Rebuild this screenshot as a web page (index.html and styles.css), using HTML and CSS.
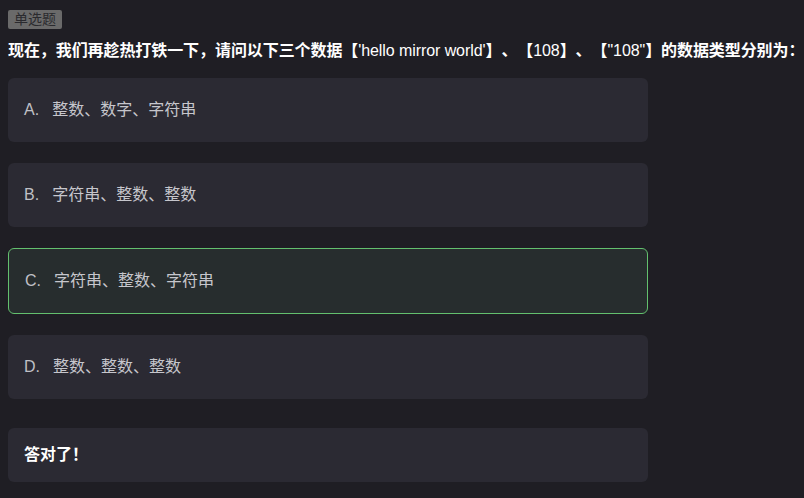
FILE: index.html
```html
<!DOCTYPE html>
<html lang="zh">
<head>
<meta charset="utf-8">
<link rel="stylesheet" href="styles.css">
</head>
<body>
<div class="quiz">
  <span class="badge">单选题</span>
  <div class="question">现在，我们再趁热打铁一下，请问以下三个数据【<span class="latin">'hello mirror world'</span>】、【<span class="latin">108</span>】、【<span class="latin">"108"</span>】的数据类型分别为：</div>
  <div class="options">
    <div class="option"><span class="letter">A.</span>整数、数字、字符串</div>
    <div class="option"><span class="letter">B.</span>字符串、整数、整数</div>
    <div class="option option-correct"><span class="letter">C.</span>字符串、整数、字符串</div>
    <div class="option"><span class="letter">D.</span>整数、整数、整数</div>
  </div>
  <div class="result">答对了！</div>
</div>
</body>
</html>
```
FILE: styles.css
```css
html, body {
  margin: 0;
  padding: 0;
  background: #1f1e24;
}
body {
  font-family: "Liberation Sans", "Noto Sans CJK SC", sans-serif;
  color: #c6c6cc;
  text-spacing-trim: space-all;
}
.quiz {
  padding: 10px 8px;
  display: flex;
  flex-direction: column;
  align-items: flex-start;
}
.badge {
  display: inline-block;
  background: #6a6a6a;
  color: #2a2a2e;
  font-size: 14px;
  line-height: 19px;
  padding: 0 6px;
  border-radius: 2px;
}
.question {
  margin: 10px 0 15px;
  font-size: 16px;
  line-height: 24px;
  font-weight: bold;
  color: #ffffff;
  white-space: nowrap;
  letter-spacing: -0.08px;
}
.latin {
  font-weight: normal;
}
.options {
  display: flex;
  flex-direction: column;
  gap: 21px;
  width: 640px;
}
.option {
  height: 64px;
  line-height: 64px;
  padding: 0 16px;
  background: #2b2a33;
  border-radius: 6px;
  font-size: 16px;
  white-space: nowrap;
}
.option-correct {
  background: #272d2e;
  border: 1px solid #63c06e;
}
.letter {
  margin-right: 13px;
  color: #c0c0c6;
}
.result {
  margin-top: 29px;
  width: 608px;
  height: 54px;
  line-height: 54px;
  padding: 0 16px;
  background: #2b2a33;
  border-radius: 6px;
  font-size: 16px;
  font-weight: bold;
  color: #ffffff;
}
```
